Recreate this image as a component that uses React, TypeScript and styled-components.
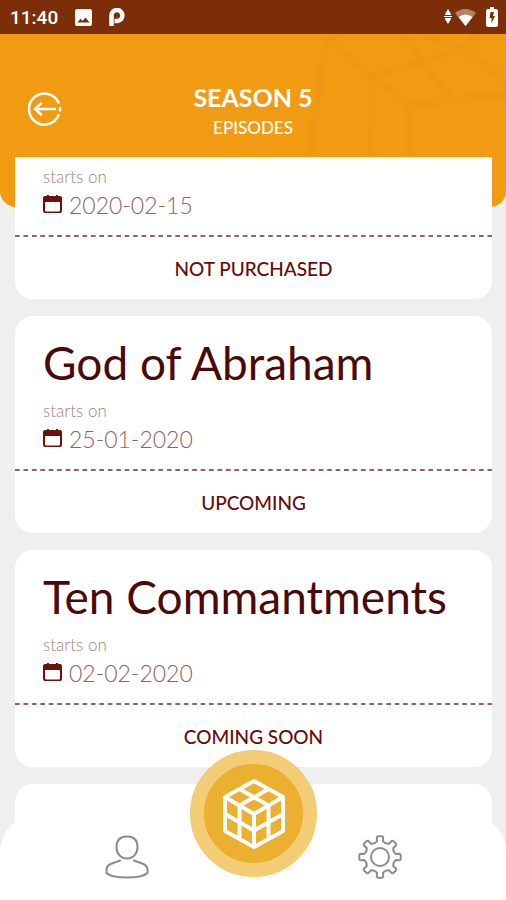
import React from "react";
import styled, { createGlobalStyle } from "styled-components";

const GlobalStyle = createGlobalStyle`
  * { box-sizing: border-box; }
  body { margin: 0; background: #efefef; font-family: "Lato", sans-serif; color: #4a0a08; }
  h1, h2, p { margin: 0; font-weight: inherit; }
  button { border: 0; padding: 0; background: none; color: inherit; font: inherit; cursor: pointer; }
  svg { display: block; }
`;

const Screen = styled.div`
  display: flex;
  flex-direction: column;
  height: 100vh;
  overflow: hidden;
`;

const StatusBar = styled.div`
  display: flex;
  justify-content: space-between;
  align-items: center;
  height: 34px;
  flex: none;
  padding: 0 8px 0 10px;
  background: #7b2e08;
  color: #fff;
  font: 500 19px "Roboto", sans-serif;
`;

const StatusGroup = styled.div<{ $gap: number }>`
  display: flex;
  align-items: center;
  gap: ${(p) => p.$gap}px;
`;

const Header = styled.header`
  position: relative;
  display: grid;
  grid-template-columns: 60px 1fr 60px;
  align-items: center;
  flex: none;
  height: 173px;
  margin-bottom: -50px;
  padding: 26px 15px 50px;
  background: #f19b12;
  border-radius: 0 0 16px 16px;
  color: #fff;
  text-align: center;
  overflow: hidden;
`;

const Watermark = styled.svg`
  position: absolute;
  top: 0;
  right: 0;
`;

const BackButton = styled.button`
  justify-self: center;
`;

const Heading = styled.div`
  position: relative;
  padding-top: 8px;
`;

const Title = styled.h1`
  font-size: 25px;
  line-height: 30px;
  font-weight: 700;
`;

const Subtitle = styled.p`
  font-size: 17px;
  line-height: 32px;
  font-weight: 500;
`;

const List = styled.main`
  position: relative;
  flex: 1;
  min-height: 0;
  overflow: hidden;
  display: flex;
  flex-direction: column;
  gap: 17px;
  padding: 0 14px 0 15px;
`;

const Card = styled.article<{ $continued?: boolean }>`
  flex: none;
  min-height: ${(p) => (p.$continued ? 0 : 217)}px;
  padding-top: ${(p) => (p.$continued ? 8 : 20)}px;
  background: #fff;
  border-radius: ${(p) => (p.$continued ? "0 0 18px 18px" : "18px")};
`;

const CardTitle = styled.h2`
  padding: 0 28px;
  margin-bottom: 9px;
  font-size: 46px;
  line-height: 54px;
`;

const Caption = styled.p`
  padding: 0 28px;
  font-size: 17px;
  line-height: 24px;
  font-weight: 300;
  color: #9c8580;
`;

const DateRow = styled.p`
  display: flex;
  align-items: center;
  gap: 7px;
  padding: 0 28px;
  font-size: 23px;
  line-height: 32px;
  font-weight: 300;
  color: #8c6560;
`;

const Divider = styled.div`
  height: 2px;
  margin-top: 14px;
  background: linear-gradient(90deg, #96625a 50%, transparent 50%) 0 0 / 1.77% 100%;
`;

const StatusButton = styled.button`
  display: block;
  width: 100%;
  height: 62px;
  font-size: 19px;
  font-weight: 500;
  color: #650c08;
`;

const TabBar = styled.nav`
  position: relative;
  display: grid;
  grid-template-columns: 1fr 1fr;
  place-items: center;
  flex: none;
  height: 86px;
  margin-top: -86px;
  background: #fff;
  border-radius: 38px 38px 0 0;
`;

const HomeButton = styled.button`
  position: absolute;
  left: 50%;
  top: -64px;
  display: grid;
  place-items: center;
  width: 127px;
  height: 127px;
  margin-left: -63px;
  border: 14px solid #f3cd76;
  border-radius: 50%;
  background: #ebb02f;
`;

const CalendarIcon = () => (
  <svg width="19" height="20" viewBox="0 0 19 20" fill="#6d120b" aria-hidden="true">
    <path d="M2 1h2V0h2v1h7V0h2v1h2q2 0 2 2v13q0 2-2 2H2q-2 0-2-2V3q0-2 2-2zm0 6v8.500q0 1 1 1h13q1 0 1-1V7z" />
  </svg>
);

const polar = (radius: number, degrees: number) => {
  const a = ((degrees - 90) * Math.PI) / 180;
  return `${(22 + radius * Math.cos(a)).toFixed(2)} ${(22 + radius * Math.sin(a)).toFixed(2)}`;
};

const gearPath =
  [0, 45, 90, 135, 180, 225, 270, 315]
    .map(
      (t, i) =>
        `${i ? "L" : "M"}${polar(16, t - 11)}L${polar(20, t - 9)}Q${polar(20.8, t - 8)} ${polar(20.8, t - 5)}` +
        `L${polar(20.8, t + 5)}Q${polar(20.8, t + 8)} ${polar(20, t + 9)}L${polar(16, t + 11)}Q${polar(14, t + 22.5)} ${polar(16, t + 34)}`
    )
    .join("") + "Z";

const cards = [
  { date: "2020-02-15", status: "NOT PURCHASED", continued: true },
  { title: "God of Abraham", date: "25-01-2020", status: "UPCOMING" },
  { title: "Ten Commantments", date: "02-02-2020", status: "COMING SOON" },
];

export default function App() {
  return (
    <Screen>
      <GlobalStyle />
      <StatusBar>
        <StatusGroup $gap={17}>
          <span>11:40</span>
          <svg width="17" height="17" viewBox="0 0 17 17" aria-hidden="true">
            <path fill="#fff" fillRule="evenodd" d="M2 0h13q2 0 2 2v13q0 2-2 2H2q-2 0-2-2V2q0-2 2-2zM2.500 13.500h12l-4-5-3 3.500-2-2.200z" />
          </svg>
          <svg width="16" height="19" viewBox="0 0 16 19" aria-hidden="true">
            <path fill="none" stroke="#fff" strokeWidth="4.500" d="M2.500 18V8.500a5.500 5.500 0 1 1 5.500 4.500H5.500" />
          </svg>
        </StatusGroup>
        <StatusGroup $gap={3}>
          <svg width="8" height="16" viewBox="0 0 8 16" fill="#fff" aria-hidden="true">
            <path d="M4 0l3 5v1H1V5zM4 15l3-5V9H1v1zM0 7h8v1H0z" />
          </svg>
          <svg width="21" height="17" viewBox="0 0 21 17" aria-hidden="true">
            <path fill="#b48467" d="M0 4q10.500-8 21 0L10.500 17z" />
            <path fill="#fff" d="M3.500 8q7-5 14 0l-7 9z" />
          </svg>
          <svg width="19" height="20" viewBox="0 0 19 20" aria-hidden="true">
            <path fill="#fff" d="M11 2V0h4v2h2q2 0 2 2v14q0 2-2 2H9q-2 0-2-2V4q0-2 2-2z" />
            <path fill="#7b2e08" d="M15 5h-3.500l-1 6h2v5l3.500-7h-2z" />
          </svg>
        </StatusGroup>
      </StatusBar>

      <Header>
        <Watermark width="200" height="173" viewBox="0 0 200 173" fill="none" stroke="#ed9713" strokeWidth="7" strokeLinejoin="round" aria-hidden="true">
          <path d="M2 130L20 6L66 42L64 130M66 42L158 16M20 6L60 -8M92 -10L158 16L206 52M116 28L146 66L206 60M92 -10L116 28M158 16L176 -10M146 66L104 70L66 42M104 70V130" />
        </Watermark>
        <BackButton aria-label="Back">
          <svg width="34" height="34" viewBox="0 0 34 34" fill="none" stroke="#fff" strokeWidth="2.500" strokeLinecap="round" aria-hidden="true">
            <path d="M30.500 10.500A15.500 15.500 0 1 0 30.500 23.500M7 17h20M13 11.500L7 17l6 5.500M32 15.800v2.400" />
          </svg>
        </BackButton>
        <Heading>
          <Title>SEASON 5</Title>
          <Subtitle>EPISODES</Subtitle>
        </Heading>
      </Header>

      <List>
        {cards.map((c) => (
          <Card key={c.date} $continued={c.continued}>
            {c.title && <CardTitle>{c.title}</CardTitle>}
            <Caption>starts on</Caption>
            <DateRow>
              <CalendarIcon />
              <time>{c.date}</time>
            </DateRow>
            <Divider />
            <StatusButton>{c.status}</StatusButton>
          </Card>
        ))}
        <Card />
      </List>

      <TabBar>
        <button aria-label="Profile">
          <svg width="44" height="44" viewBox="0 0 44 44" fill="none" stroke="#8c8c8c" strokeWidth="2" strokeLinecap="round" aria-hidden="true">
            <path d="M22 1.500c7 0 10.500 4 10.500 10.500S28.500 23.500 22 23.500 11.500 18.500 11.500 12 15 1.500 22 1.500zM15 25.500C9 28 1.500 28.500 1.500 35v3c6 6 35 6 41 0v-3c0-6.500-7.500-7-13.500-9.500" />
          </svg>
        </button>
        <button aria-label="Settings">
          <svg width="44" height="44" viewBox="0 0 44 44" fill="none" stroke="#8c8c8c" strokeWidth="2" strokeLinejoin="round" aria-hidden="true">
            <circle cx="22" cy="22" r="9" />
            <path d={gearPath} />
          </svg>
        </button>
        <HomeButton aria-label="Home">
          <svg width="62" height="70" viewBox="0 0 62 70" fill="none" stroke="#fff" strokeWidth="4" strokeLinejoin="round" aria-hidden="true">
            <path d="M31 2L60 18V52L31 68L2 52V18zM2 18L31 35L60 18M31 35V68M16.500 10L45.500 26.500V60M45.500 10L16.500 26.500V60M2 35L31 51.500L60 35" />
          </svg>
        </HomeButton>
      </TabBar>
    </Screen>
  );
}
